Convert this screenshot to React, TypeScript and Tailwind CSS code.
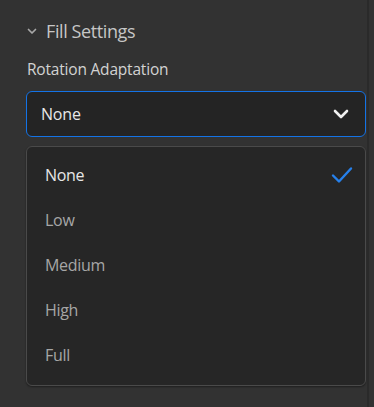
import React from "react";

const items = ["None", "Low", "Medium", "High", "Full"];

export default function App() {
  return (
    <div
      className="w-[374px] h-[407px] bg-[#323232] flex overflow-hidden"
      style={{ fontFamily: '"Open Sans", "Noto Sans", sans-serif' }}
    >
      <div className="w-[367px] flex flex-col pl-[26px] pr-[1px]">
        <div className="flex items-center h-[24px] mt-[19px] pl-[1px]">
          <svg width="10" height="7" viewBox="0 0 10 7" className="mr-[9px] mt-[1px]">
            <path d="M1.5 1.5 L5 5 L8.5 1.5" stroke="#a8a8a8" strokeWidth="1.7" fill="none" strokeLinecap="round" strokeLinejoin="round" />
          </svg>
          <span className="text-[18px] text-[#c6c6c6] tracking-[-0.4px]">Fill Settings</span>
        </div>
        <div className="mt-[17px] h-[20px] flex items-center pl-[1px] text-[15.5px] text-[#d2d2d2] tracking-[-0.2px]">
          Rotation Adaptation
        </div>
        <div className="mt-[11px] h-[46px] rounded-[6px] border-[1.5px] border-[#1473e6] bg-[#242424] flex items-center justify-between pl-[14px] pr-[16px]">
          <span className="text-[16px] text-[#e8e8e8] tracking-[-0.2px]">None</span>
          <svg width="16" height="10" viewBox="0 0 16 10">
            <path d="M2 2 L8 8 L14 2" stroke="#f0f0f0" strokeWidth="2.6" fill="none" strokeLinecap="round" strokeLinejoin="round" />
          </svg>
        </div>
        <div className="mt-[9px] h-[240px] rounded-[6px] border border-[#4a4a4a] bg-[#262626] flex flex-col pt-[5px] shadow-[0_1px_2px_rgba(0,0,0,0.4)]">
          {items.map((it, i) => (
            <div key={it} className="h-[45px] flex items-center justify-between pl-[18px] pr-[12px]">
              <span className={`text-[16px] tracking-[-0.3px] ${i === 0 ? "text-[#e6e6e6]" : "text-[#a6a6a6]"}`}>{it}</span>
              {i === 0 && (
                <svg width="22" height="18" viewBox="0 0 22 18">
                  <path d="M2 9.5 L8 15.5 L20 2.5" stroke="#2680eb" strokeWidth="2.4" fill="none" strokeLinecap="round" strokeLinejoin="round" />
                </svg>
              )}
            </div>
          ))}
        </div>
      </div>
      <div className="w-[2px] bg-[#2a2a2a]" />
    </div>
  );
}
